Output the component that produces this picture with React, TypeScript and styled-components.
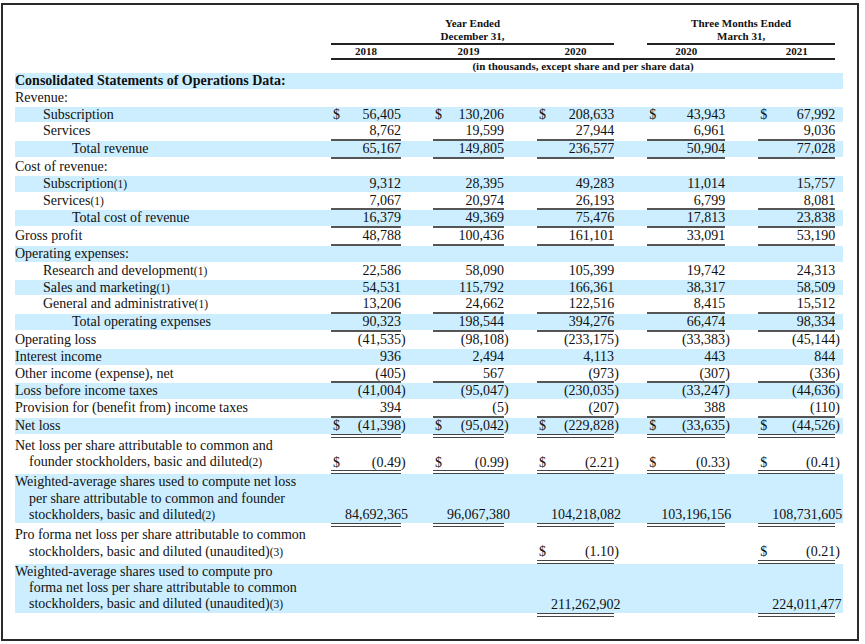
import { Fragment } from 'react';
import styled, { createGlobalStyle } from 'styled-components';

const GlobalStyle = createGlobalStyle`
  html, body {
    margin: 0;
    padding: 0;
    background: #fff;
  }
  body {
    font-family: "Liberation Serif", "Times New Roman", serif;
    color: #111;
  }
`;

type Rule = 'none' | 'single' | 'double';

type Line = {
  label: string[];
  note?: string;
  indent?: number;
  bold?: boolean;
  shade?: boolean;
  dollar?: boolean;
  rule?: Rule;
  values?: (string | null)[];
};

// widths in px of the five money columns: $ sign, figure, hanging paren, gap after
const groups = [
  { dollar: 14, num: 56, paren: 6, gap: 26 },
  { dollar: 14, num: 57, paren: 6, gap: 27 },
  { dollar: 14, num: 63, paren: 6, gap: 27 },
  { dollar: 14, num: 64, paren: 6, gap: 27 },
  { dollar: 14, num: 63, paren: 6, gap: 2 },
];

const years = ['2018', '2019', '2020', '2020', '2021'];

const rows: Line[] = [
  { label: ['Consolidated Statements of Operations Data:'], bold: true, shade: true },
  { label: ['Revenue:'] },
  {
    label: ['Subscription'],
    indent: 28,
    shade: true,
    dollar: true,
    values: ['56,405', '130,206', '208,633', '43,943', '67,992'],
  },
  {
    label: ['Services'],
    indent: 28,
    rule: 'single',
    values: ['8,762', '19,599', '27,944', '6,961', '9,036'],
  },
  {
    label: ['Total revenue'],
    indent: 57,
    shade: true,
    rule: 'single',
    values: ['65,167', '149,805', '236,577', '50,904', '77,028'],
  },
  { label: ['Cost of revenue:'] },
  {
    label: ['Subscription'],
    note: '(1)',
    indent: 28,
    shade: true,
    values: ['9,312', '28,395', '49,283', '11,014', '15,757'],
  },
  {
    label: ['Services'],
    note: '(1)',
    indent: 28,
    rule: 'single',
    values: ['7,067', '20,974', '26,193', '6,799', '8,081'],
  },
  {
    label: ['Total cost of revenue'],
    indent: 57,
    shade: true,
    rule: 'single',
    values: ['16,379', '49,369', '75,476', '17,813', '23,838'],
  },
  {
    label: ['Gross profit'],
    rule: 'single',
    values: ['48,788', '100,436', '161,101', '33,091', '53,190'],
  },
  { label: ['Operating expenses:'], shade: true },
  {
    label: ['Research and development'],
    note: '(1)',
    indent: 28,
    values: ['22,586', '58,090', '105,399', '19,742', '24,313'],
  },
  {
    label: ['Sales and marketing'],
    note: '(1)',
    indent: 28,
    shade: true,
    values: ['54,531', '115,792', '166,361', '38,317', '58,509'],
  },
  {
    label: ['General and administrative'],
    note: '(1)',
    indent: 28,
    rule: 'single',
    values: ['13,206', '24,662', '122,516', '8,415', '15,512'],
  },
  {
    label: ['Total operating expenses'],
    indent: 57,
    shade: true,
    rule: 'single',
    values: ['90,323', '198,544', '394,276', '66,474', '98,334'],
  },
  {
    label: ['Operating loss'],
    values: ['(41,535)', '(98,108)', '(233,175)', '(33,383)', '(45,144)'],
  },
  {
    label: ['Interest income'],
    shade: true,
    values: ['936', '2,494', '4,113', '443', '844'],
  },
  {
    label: ['Other income (expense), net'],
    rule: 'single',
    values: ['(405)', '567', '(973)', '(307)', '(336)'],
  },
  {
    label: ['Loss before income taxes'],
    shade: true,
    values: ['(41,004)', '(95,047)', '(230,035)', '(33,247)', '(44,636)'],
  },
  {
    label: ['Provision for (benefit from) income taxes'],
    rule: 'single',
    values: ['394', '(5)', '(207)', '388', '(110)'],
  },
  {
    label: ['Net loss'],
    shade: true,
    dollar: true,
    rule: 'double',
    values: ['(41,398)', '(95,042)', '(229,828)', '(33,635)', '(44,526)'],
  },
  {
    label: ['Net loss per share attributable to common and', 'founder stockholders, basic and diluted'],
    note: '(2)',
    dollar: true,
    rule: 'double',
    values: ['(0.49)', '(0.99)', '(2.21)', '(0.33)', '(0.41)'],
  },
  {
    label: [
      'Weighted-average shares used to compute net loss',
      'per share attributable to common and founder',
      'stockholders, basic and diluted',
    ],
    note: '(2)',
    shade: true,
    rule: 'double',
    values: ['84,692,365', '96,067,380', '104,218,082', '103,196,156', '108,731,605'],
  },
  {
    label: [
      'Pro forma net loss per share attributable to common',
      'stockholders, basic and diluted (unaudited)',
    ],
    note: '(3)',
    dollar: true,
    rule: 'double',
    values: [null, null, '(1.10)', null, '(0.21)'],
  },
  {
    label: [
      'Weighted-average shares used to compute pro',
      'forma net loss per share attributable to common',
      'stockholders, basic and diluted (unaudited)',
    ],
    note: '(3)',
    shade: true,
    rule: 'double',
    values: [null, null, '211,262,902', null, '224,011,477'],
  },
];

const ruleWidth: Record<Rule, number> = { none: 1, single: 2, double: 4 };

const Frame = styled.div`
  box-sizing: border-box;
  width: 858px;
  height: 638px;
  margin: 3px 0 0 1px;
  padding: 11px 14px 0 12px;
  border: 2px solid #2a2a2a;
`;

const Sheet = styled.table`
  table-layout: fixed;
  width: 828px;
  border-collapse: separate;
  border-spacing: 0;
  font-size: 14px;

  td,
  th {
    padding: 0;
  }
`;

const HeadCell = styled.th<{ $line: number; $rule?: boolean }>`
  font-size: 11px;
  font-weight: bold;
  text-align: center;
  white-space: nowrap;
  line-height: ${({ $line }) => $line}px;
  border-bottom: ${({ $rule }) => ($rule ? '2px solid #222' : '0')};
`;

const BodyRow = styled.tr<{ $shade?: boolean }>`
  > td {
    background: ${({ $shade }) => ($shade ? '#cceeff' : 'transparent')};
    background-clip: padding-box;
  }
`;

// every cell of a row carries the row's rule width, so bands and figures line up;
// only the figure cells that are underlined get a visible colour
const Cell = styled.td<{ $rule: Rule; $drawn?: boolean }>`
  line-height: 15.8px;
  white-space: nowrap;
  vertical-align: bottom;
  border-bottom-width: ${({ $rule }) => ruleWidth[$rule]}px;
  border-bottom-style: ${({ $rule, $drawn }) => ($drawn && $rule === 'double' ? 'double' : 'solid')};
  border-bottom-color: ${({ $rule, $drawn }) =>
    !$drawn || $rule === 'none' ? 'transparent' : $rule === 'double' ? '#444' : '#555'};
`;

const Label = styled(Cell)<{ $indent: number; $bold?: boolean; $wrap?: boolean }>`
  vertical-align: top;
  font-weight: ${({ $bold }) => ($bold ? 'bold' : 'normal')};
  line-height: ${({ $wrap }) => ($wrap ? '16.3px' : '15.8px')};
  padding-left: ${({ $indent, $wrap }) => $indent + ($wrap ? 14 : 0)}px !important;
  text-indent: ${({ $wrap }) => ($wrap ? -14 : 0)}px;
`;

const Note = styled.span`
  font-size: 11.5px;
  line-height: 0;
`;

const Dollar = styled(Cell)`
  text-align: left;
  padding-left: 2px !important;
`;

const Num = styled(Cell)`
  text-align: right;
`;

const Paren = styled(Cell)`
  text-align: left;
`;

const Gap = styled(Cell)``;

const splitValue = (v: string | null) => {
  if (!v) return { num: '', close: '' };
  if (v.endsWith(')')) return { num: v.slice(0, -1), close: ')' };
  return { num: v, close: '' };
};

const StatementRow = ({ row }: { row: Line }) => {
  const wrap = row.label.length > 1;
  const rule: Rule = row.rule ?? 'none';
  return (
    <BodyRow $shade={row.shade}>
      <Label $rule={rule} $indent={row.indent ?? 0} $bold={row.bold} $wrap={wrap}>
        {row.label.map((text, i) => (
          <Fragment key={i}>
            {i > 0 && <br />}
            {text}
            {i === row.label.length - 1 && row.note && <Note>{row.note}</Note>}
          </Fragment>
        ))}
      </Label>
      {groups.map((g, i) => {
        const v = row.values ? row.values[i] : null;
        const { num, close } = splitValue(v);
        return (
          <Fragment key={i}>
            <Dollar $rule={rule} $drawn={!!v}>{v && row.dollar ? '$' : ''}</Dollar>
            <Num $rule={rule} $drawn={!!v}>{num}</Num>
            <Paren $rule={rule}>{close}</Paren>
            <Gap $rule={rule} />
          </Fragment>
        );
      })}
    </BodyRow>
  );
};

const App = () => (
  <>
    <GlobalStyle />
    <Frame>
      <Sheet>
        <colgroup>
          <col style={{ width: 316 }} />
          {groups.map((g, i) => (
            <Fragment key={i}>
              <col style={{ width: g.dollar }} />
              <col style={{ width: g.num }} />
              <col style={{ width: g.paren }} />
              <col style={{ width: g.gap }} />
            </Fragment>
          ))}
        </colgroup>
        <thead>
          <tr>
            <th />
            <HeadCell $line={14} colSpan={10}>Year Ended</HeadCell>
            <th colSpan={2} />
            <HeadCell $line={14} colSpan={6}>Three Months Ended</HeadCell>
            <th colSpan={2} />
          </tr>
          <tr>
            <th />
            <HeadCell $line={13} $rule colSpan={10}>December 31,</HeadCell>
            <th colSpan={2} />
            <HeadCell $line={13} $rule colSpan={6}>March 31,</HeadCell>
            <th colSpan={2} />
          </tr>
          <tr>
            <th />
            {years.map((y, i) => (
              <Fragment key={i}>
                <HeadCell $line={13} $rule colSpan={2}>{y}</HeadCell>
                {i < years.length - 1 ? (
                  <HeadCell $line={13} $rule colSpan={2} />
                ) : (
                  <th colSpan={2} />
                )}
              </Fragment>
            ))}
          </tr>
          <tr>
            <th />
            <HeadCell $line={13} colSpan={18}>
              (in thousands, except share and per share data)
            </HeadCell>
            <th colSpan={2} />
          </tr>
        </thead>
        <tbody>
          {rows.map((row, i) => (
            <StatementRow key={i} row={row} />
          ))}
        </tbody>
      </Sheet>
    </Frame>
  </>
);

export default App;
